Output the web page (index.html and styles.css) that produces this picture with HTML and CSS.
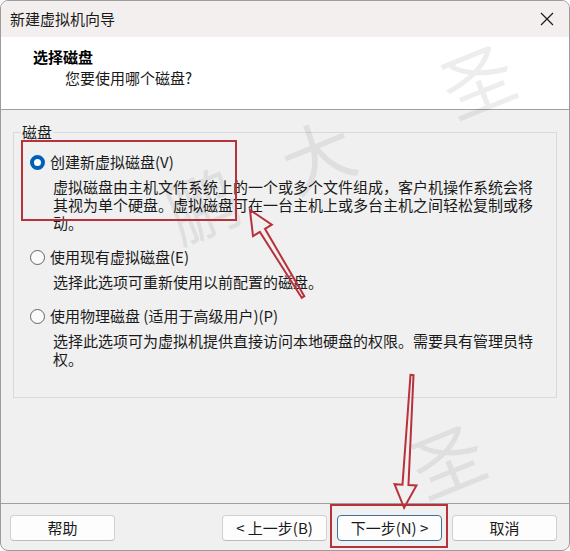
FILE: index.html
```html
<!DOCTYPE html>
<html lang="zh-CN">
<head>
<meta charset="utf-8">
<title>新建虚拟机向导</title>
<link rel="stylesheet" href="styles.css">
</head>
<body>
<div class="window">
  <div class="titlebar">
    <span class="title">新建虚拟机向导</span>
    <svg class="close" width="14" height="14" viewBox="0 0 14 14"><path d="M1 1 L13 13 M13 1 L1 13" stroke="#1b1b1b" stroke-width="1.2" fill="none"/></svg>
  </div>
  <div class="header">
    <div class="h-title">选择磁盘</div>
    <div class="h-sub">您要使用哪个磁盘?</div>
  </div>
  <div class="body">
    <fieldset class="group">
      <legend>磁盘</legend>
      <div class="option">
        <div class="opt-title"><span class="radio checked"></span><span>创建新虚拟磁盘(V)</span></div>
        <p class="desc">虚拟磁盘由主机文件系统上的一个或多个文件组成，客户机操作系统会将其视为单个硬盘。虚拟磁盘可在一台主机上或多台主机之间轻松复制或移动。</p>
      </div>
      <div class="option">
        <div class="opt-title"><span class="radio"></span><span>使用现有虚拟磁盘(E)</span></div>
        <p class="desc">选择此选项可重新使用以前配置的磁盘。</p>
      </div>
      <div class="option">
        <div class="opt-title"><span class="radio"></span><span>使用物理磁盘 (适用于高级用户)(P)</span></div>
        <p class="desc">选择此选项可为虚拟机提供直接访问本地硬盘的权限。需要具有管理员特权。</p>
      </div>
    </fieldset>
  </div>
  <div class="footer">
    <button class="btn">帮助</button>
    <div class="spacer"></div>
    <button class="btn">&lt; 上一步(B)</button>
    <button class="btn default">下一步(N) &gt;</button>
    <button class="btn">取消</button>
  </div>
  <svg class="overlay" width="570" height="551" viewBox="0 0 570 551">
    <g class="wm" font-family="Noto Sans CJK SC, sans-serif" font-size="72" fill="#000" fill-opacity="0.07">
      <text transform="translate(180,245) rotate(-22)">鹏</text>
      <text transform="translate(295,195) rotate(-22)">大</text>
      <text transform="translate(455,120) rotate(-22)">圣</text>
      <text transform="translate(425,500) rotate(-22)">圣</text>
    </g>
    <g fill="none" stroke="#b8323c" stroke-width="2">
      <rect x="22" y="141" width="214" height="79"/>
      <rect x="331" y="505" width="116" height="42"/>
      <path transform="translate(303,297) rotate(-121.35)" d="M0 -1.5 L78 -3 L78 -11 L102 0 L78 11 L78 3 L0 1.5 Z" stroke-linejoin="miter"/>
      <path transform="translate(412,375) rotate(93.4)" d="M0 -1.5 L110 -3 L110 -11 L133 0 L110 11 L110 3 L0 1.5 Z" stroke-linejoin="miter"/>
    </g>
  </svg>
</div>
</body>
</html>
```

FILE: styles.css
```css
html, body {
  margin: 0;
  padding: 0;
  background: #ffffff;
}

body {
  font-family: "Noto Sans CJK SC", "Noto Sans", sans-serif;
  font-size: 15px;
  color: #1a1a1a;
}

.window {
  position: relative;
  width: 570px;
  height: 551px;
  box-sizing: border-box;
  border: 1px solid #9c9c9c;
  border-radius: 8px;
  overflow: hidden;
  display: flex;
  flex-direction: column;
  background: #f0f0f0;
}

.titlebar {
  height: 36px;
  flex: none;
  background: #f3efee;
  display: flex;
  align-items: center;
  justify-content: space-between;
  padding: 0 15px 0 9px;
}

.title {
  font-size: 15px;
  line-height: 20px;
  color: #1a1a1a;
}

.close {
  display: block;
}

.header {
  height: 62px;
  flex: none;
  background: #ffffff;
  border-bottom: 1px solid #a0a0a0;
  padding: 10px 0 0 32px;
}

.h-title {
  font-weight: 700;
  font-size: 15px;
  line-height: 20px;
  color: #000;
}

.h-sub {
  font-size: 15px;
  line-height: 20px;
  padding-left: 32px;
  margin-top: 1px;
  color: #1a1a1a;
}

.body {
  flex: 1;
  border-bottom: 1px solid #a0a0a0;
  padding-top: 13px;
}

.group {
  margin: 0 12px;
  padding: 11px 0 29px 0;
  border: 1px solid #d9d9d9;
  border-radius: 0;
  min-width: 0;
}

.group legend {
  margin-left: 7px;
  padding: 0 1px;
  font-size: 15px;
  line-height: 18px;
  color: #1a1a1a;
}

.option {
  margin-left: 16px;
}

.option + .option {
  margin-top: 15px;
}

.opt-title {
  display: flex;
  align-items: center;
  gap: 5px;
  height: 20px;
  line-height: 20px;
}

.radio {
  width: 15px;
  height: 15px;
  box-sizing: border-box;
  border-radius: 50%;
  border: 1px solid #636363;
  background: #fbfbfb;
  flex: none;
}

.radio.checked {
  border: 4px solid #005fb8;
  background: #ffffff;
}

.desc {
  margin: 6px 0 0 23px;
  width: 482px;
  line-height: 18px;
  font-size: 15px;
}

.footer {
  height: 46px;
  flex: none;
  display: flex;
  align-items: flex-start;
  gap: 10px;
  padding: 11px 12px 0 9px;
  box-sizing: border-box;
}

.spacer {
  flex: 1;
}

.btn {
  width: 105px;
  height: 26px;
  padding: 0;
  font-family: inherit;
  font-size: 15px;
  line-height: 20px;
  color: #1a1a1a;
  background: #fdfdfd;
  border: 1px solid #d0d0d0;
  border-bottom-color: #bcbcbc;
  border-radius: 4px;
  white-space: nowrap;
}

.btn.default {
  border: 1px solid #41709c;
}

.overlay {
  position: absolute;
  left: -1px;
  top: -1px;
  pointer-events: none;
}
```
